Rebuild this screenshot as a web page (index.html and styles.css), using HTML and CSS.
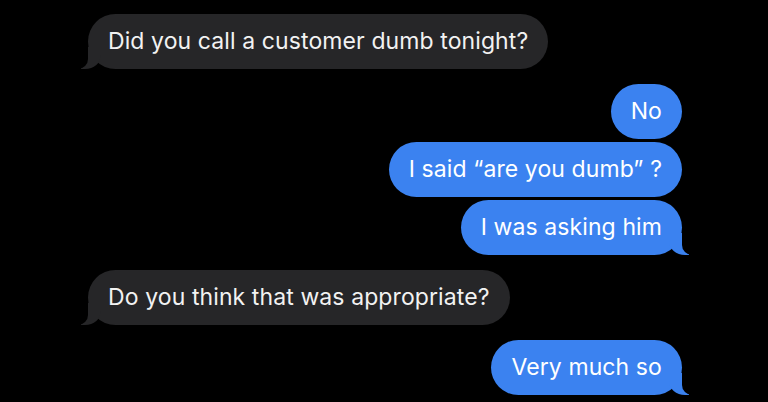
FILE: index.html
```html
<!DOCTYPE html>
<html lang="en">
<head>
    <meta charset="UTF-8">
    <meta name="viewport" content="width=device-width, initial-scale=1.0">
    <title>Messages</title>
    <link rel="stylesheet" href="styles.css">
</head>
<body>
    <div class="chat">
        <div class="row them">
            <p class="bubble tail">Did you call a customer dumb tonight?</p>
        </div>
        <div class="group">
            <div class="row me">
                <p class="bubble">No</p>
            </div>
            <div class="row me">
                <p class="bubble">I said “are you dumb” ?</p>
            </div>
            <div class="row me">
                <p class="bubble tail">I was asking him</p>
            </div>
        </div>
        <div class="row them">
            <p class="bubble tail">Do you think that was appropriate?</p>
        </div>
        <div class="row me">
            <p class="bubble tail">Very much so</p>
        </div>
    </div>
</body>
</html>
```

FILE: styles.css
```css
body{
    margin: 0;
    background: #000;
    font-family: "Inter", "Liberation Sans", sans-serif;
}
.chat{
    display: flex;
    flex-direction: column;
    gap: 15px;
    padding: 14px 86px 0 88px;
}
.group{
    display: flex;
    flex-direction: column;
    gap: 3px;
}
.row{
    display: flex;
}
.row.me{
    justify-content: flex-end;
}
.bubble{
    position: relative;
    margin: 0;
    padding: 14px 20px;
    font-size: 23px;
    line-height: 27px;
    letter-spacing: 0.1px;
    border-radius: 28px;
    color: #f2f2f2;
}
.them .bubble{
    background: #262628;
}
.me .bubble{
    background: #3b82f0;
    color: #fff;
}
.bubble.tail::before,
.bubble.tail::after{
    content: "";
    position: absolute;
    bottom: 0;
    height: 22px;
}
.me .tail::before{
    right: -7px;
    width: 20px;
    background: #3b82f0;
    border-bottom-left-radius: 16px 14px;
}
.me .tail::after{
    right: -10px;
    width: 10px;
    background: #000;
    border-bottom-left-radius: 10px;
}
.them .tail::before{
    left: -7px;
    width: 20px;
    background: #262628;
    border-bottom-right-radius: 16px 14px;
}
.them .tail::after{
    left: -10px;
    width: 10px;
    background: #000;
    border-bottom-right-radius: 10px;
}
```
